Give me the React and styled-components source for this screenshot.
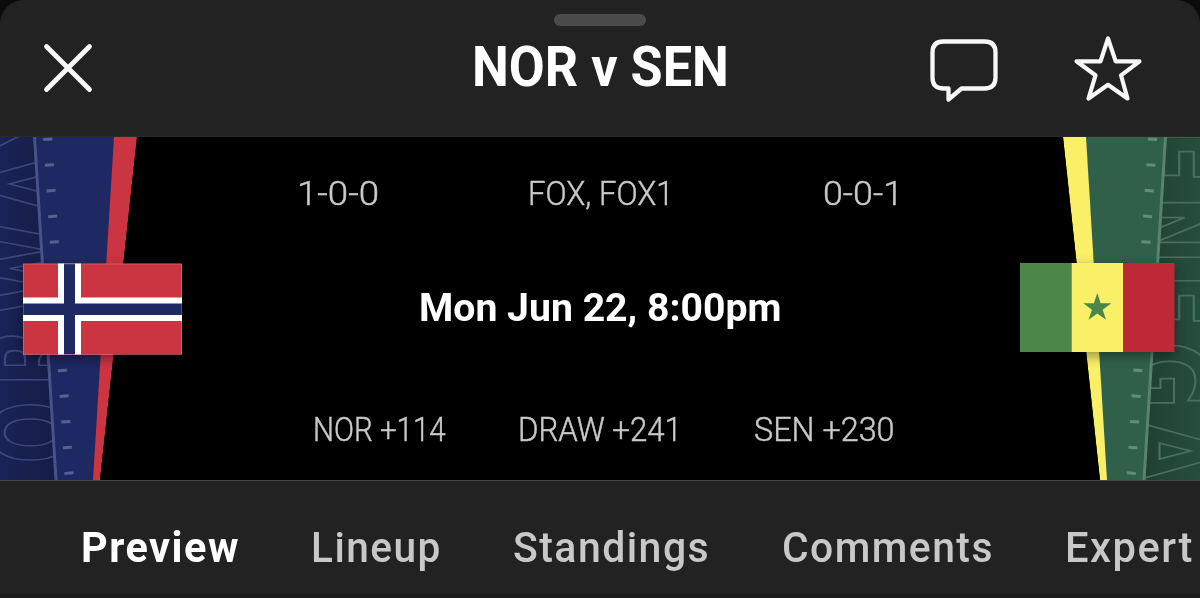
import React, { useLayoutEffect, useRef, useState } from "react";
import styled, { createGlobalStyle } from "styled-components";

const GlobalStyle = createGlobalStyle`
  * { box-sizing: border-box; }
  body { margin: 0; background: #0b0b0b; overflow: hidden; }
`;

const Sheet = styled.main`
  width: 1200px;
  height: 598px;
  display: flex;
  flex-direction: column;
  background: #222;
  border-radius: 24px 24px 0 0;
  overflow: hidden;
  font-family: Roboto, "Liberation Sans", sans-serif;
`;

const Header = styled.header`
  height: 137px;
  display: grid;
  grid-template-columns: 1fr 260px 1fr;
  grid-template-rows: 26px 1fr;
  border-bottom: 1px solid #2a2a2a;
`;

const Grabber = styled.div`
  grid-column: 2;
  justify-self: center;
  align-self: end;
  width: 92px;
  height: 12px;
  border-radius: 6px;
  background: #4a4a4a;
`;

const Side = styled.div`
  grid-row: 2;
  grid-column: ${(p) => (p.$end ? 3 : 1)};
  display: flex;
  align-items: flex-start;
  justify-content: ${(p) => (p.$end ? "flex-end" : "flex-start")};
  gap: 72px;
  padding: ${(p) => (p.$end ? "8px 56px 0 0" : "14px 0 0 40px")};
`;

const IconButton = styled.button`
  display: block;
  padding: 0;
  border: 0;
  background: none;
  svg { display: block; fill: none; stroke: #f6f6f6; stroke-linecap: round; stroke-linejoin: round; }
`;

const Title = styled.h1`
  grid-row: 2;
  grid-column: 2;
  margin: 0;
  display: flex;
  justify-content: center;
  font-size: 55px;
  line-height: 64px;
  font-weight: 700;
  color: #fff;
  padding-top: 9px;
`;

const Hero = styled.section`
  height: 343px;
  display: grid;
  grid-template-columns: 200px 800px 200px;
  background: #000;
`;

const Banner = styled.svg`
  display: block;
  width: 200px;
  height: 343px;
`;

const Details = styled.div`
  display: flex;
  flex-direction: column;
  padding-top: 34px;
`;

const Row = styled.div`
  display: flex;
  height: 46px;
  align-items: center;
  padding-left: ${(p) => p.$left}px;
  gap: ${(p) => p.$gap}px;
  font-size: 33.5px;
  font-weight: 300;
  -webkit-text-stroke: 0.45px #c9c9c9;
  line-height: 46px;
  color: #c9c9c9;
`;

const Kickoff = styled.div`
  display: flex;
  justify-content: center;
  font-size: 39.5px;
  line-height: 46px;
  font-weight: 700;
  color: #fff;
  margin: 68px 0 76px;
`;

const Tabs = styled.nav`
  height: 118px;
  display: flex;
  align-items: flex-start;
  gap: 71.5px;
  padding: 42px 0 0 80.5px;
  border-top: 1px solid #464646;
  border-bottom: 4px solid #1b1b1b;
`;

const Tab = styled.a`
  flex: none;
  font-size: 42px;
  line-height: 50px;
  font-weight: ${(p) => (p.$active ? 700 : 500)};
  letter-spacing: 1.5px;
  color: ${(p) => (p.$active ? "#fff" : "#c8c8c8")};
`;

const Slot = styled.span`
  display: block;
  flex: none;
  white-space: nowrap;
  width: ${(p) => p.$width}px;
`;

const Glyphs = styled.span`
  display: inline-block;
  transform-origin: 0 50%;
`;

// Condenses or widens a line of text so that it fills its slot.
function Fit({ width, children }) {
  const ref = useRef(null);
  const [scale, setScale] = useState(1);
  useLayoutEffect(() => {
    setScale(width / ref.current.offsetWidth);
  }, [width, children]);
  return (
    <Slot $width={width}>
      <Glyphs ref={ref} style={{ transform: `scaleX(${scale})` }}>{children}</Glyphs>
    </Slot>
  );
}

const BannerLetter = styled.text`
  font-family: "DejaVu Sans", sans-serif;
  font-size: 107px;
  font-weight: 700;
  fill: none;
  stroke-width: 1.9px;
  vector-effect: non-scaling-stroke;
  text-anchor: middle;
`;

const ticks = [...Array(14).keys()];

const norway = [
  ["O", 295.5, 0.69], ["R", 220, 0.72], ["W", 131.5, 0.78], ["A", 47, 0.75], ["Y", -17, 0.76],
];
const senegal = [
  ["E", 19.5, 0.74], ["N", 93, 0.78], ["E", 163.5, 0.74], ["G", 238, 0.77], ["A", 314, 0.75],
];

function NorwayBanner() {
  return (
    <Banner viewBox="0 0 200 343">
      <defs>
        <linearGradient id="nShade" x1="0" x2="1">
          <stop offset="0" stopColor="#1a2357" />
          <stop offset="1" stopColor="#151b43" />
        </linearGradient>
        <filter id="shadow" x="-20%" y="-20%" width="140%" height="150%">
          <feDropShadow dx="0" dy="4" stdDeviation="6" floodColor="#000" floodOpacity=".4" />
        </filter>
        <clipPath id="nClip"><path d="M0 0H137L100 343H0Z" /></clipPath>
      </defs>
      <g clipPath="url(#nClip)">
        <path d="M0 0H60V343H0Z" fill="url(#nShade)" />
        {norway.map(([c, y, s]) => (
          <BannerLetter key={c} stroke="#3b477d" transform={`translate(69 ${y}) rotate(-90) scale(${s} 1)`}>{c}</BannerLetter>
        ))}
        <path d="M34 0H116L95 343H56Z" fill="#1e2862" />
        <path d="M114 0H137L100 343H93Z" fill="#cb3441" />
        <path d="M34.5 0L56 343" stroke="#475289" strokeWidth="3" />
        {ticks.map((i) => (
          <path key={i} d={`M${43.3 + i * 1.63} ${2.6 + i * 25.68}l9 -.6`} stroke="#56618f" strokeWidth="3" />
        ))}
        <path filter="url(#shadow)" d="M23 127H182V217.5H23Z" fill="#cb3441" />
      </g>
      <path d="M23 126.500H182V217.500H23Z" fill="#cb3441" />
      <path d="M58 126.500H81V217.500H58Z M23 160.500H182V184H23Z" fill="#fff" />
      <path d="M64 126.500H75V217.500H64Z M23 166.500H182V178H23Z" fill="#1e2862" />
      <path d="M23.500 127H181.500V217.500H23.500Z" fill="none" stroke="#fff" strokeOpacity=".2" />
    </Banner>
  );
}

function SenegalBanner() {
  return (
    <Banner viewBox="0 0 200 343">
      <defs>
        <linearGradient id="sShade" x1="0" x2="1">
          <stop offset="0" stopColor="#203f30" />
          <stop offset="1" stopColor="#264e3c" />
        </linearGradient>
        <clipPath id="sClip"><path d="M63 0H200V343H100Z" /></clipPath>
      </defs>
      <g clipPath="url(#sClip)">
        <path d="M140 0H200V343H140Z" fill="url(#sShade)" />
        {senegal.map(([c, y, s]) => (
          <BannerLetter key={y} stroke="#47705f" transform={`translate(130.500 ${y}) rotate(90) scale(${s} 1)`}>{c}</BannerLetter>
        ))}
        <path d="M84 0H166L144 343H105Z" fill="#30604a" />
        <path d="M63 0H86L107 343H100Z" fill="#f9f067" />
        <path d="M165.500 0L144 343" stroke="#598370" strokeWidth="3" />
        {ticks.map((i) => (
          <path key={i} d={`M${148 - i * 1.63} ${2 + i * 25.68}l9 .6`} stroke="#648c7b" strokeWidth="3" />
        ))}
        <path filter="url(#shadow)" d="M20 126H174V215H20Z" fill="#bd2937" />
      </g>
      <path d="M20 126H71.500V215H20Z" fill="#4c8649" />
      <path d="M71.500 126H123V215H71.500Z" fill="#f9f067" />
      <path d="M123 126H174.500V215H123Z" fill="#bd2937" />
      <path d="M97.300 156L100.700 166.300H111.300L102.700 172.700L106 182.700L97.300 176.500L88.600 182.700L91.900 172.700L83.300 166.300H93.900Z" fill="#4c8649" />
    </Banner>
  );
}

const tabs = [["Preview", 159], ["Lineup", 130.5], ["Standings", 197], ["Comments", 212], ["Expert", 129]];

export default function App() {
  return (
    <>
      <GlobalStyle />
      <Sheet>
        <Header>
          <Grabber />
          <Side>
            <IconButton aria-label="Close">
              <svg width="56" height="56" strokeWidth="4.800"><path d="M6.500 6.500L49.500 49.500M49.500 6.500L6.500 49.500" /></svg>
            </IconButton>
          </Side>
          <Title><Fit width={257}>NOR v SEN</Fit></Title>
          <Side $end>
            <IconButton aria-label="Comments">
              <svg width="72" height="72" strokeWidth="4.300">
                <path d="M16 54.500H15.500Q4.500 54.500 4.500 43.500V18.500Q4.500 7.500 15.500 7.500H56.500Q67.500 7.500 67.500 18.500V43.500Q67.500 54.500 56.500 54.500H33.500L20.500 65.500V54.500Z" />
              </svg>
            </IconButton>
            <IconButton aria-label="Favorite">
              <svg width="72" height="72" strokeWidth="4.200">
                <path d="M36 4.500L43.700 27.300H67.500L49 41.300L55.500 64.500L36 50.800L16.500 64.500L23.500 41.300L4.500 27.300H28.500Z" />
              </svg>
            </IconButton>
          </Side>
        </Header>
        <Hero>
          <NorwayBanner />
          <Details>
            <Row $left={97} $gap={149}>
              <Fit width={82}>1-0-0</Fit>
              <Fit width={146}>FOX, FOX1</Fit>
              <Fit width={80}>0-0-1</Fit>
            </Row>
            <Kickoff><Fit width={362}>Mon Jun 22, 8:00pm</Fit></Kickoff>
            <Row $left={112.500} $gap={72}>
              <Fit width={133}>NOR +114</Fit>
              <Fit width={164}>DRAW +241</Fit>
              <Fit width={141}>SEN +230</Fit>
            </Row>
          </Details>
          <SenegalBanner />
        </Hero>
        <Tabs>
          {tabs.map(([name, width], i) => (
            <Tab key={name} $active={i === 0}><Fit width={width}>{name}</Fit></Tab>
          ))}
        </Tabs>
      </Sheet>
    </>
  );
}
